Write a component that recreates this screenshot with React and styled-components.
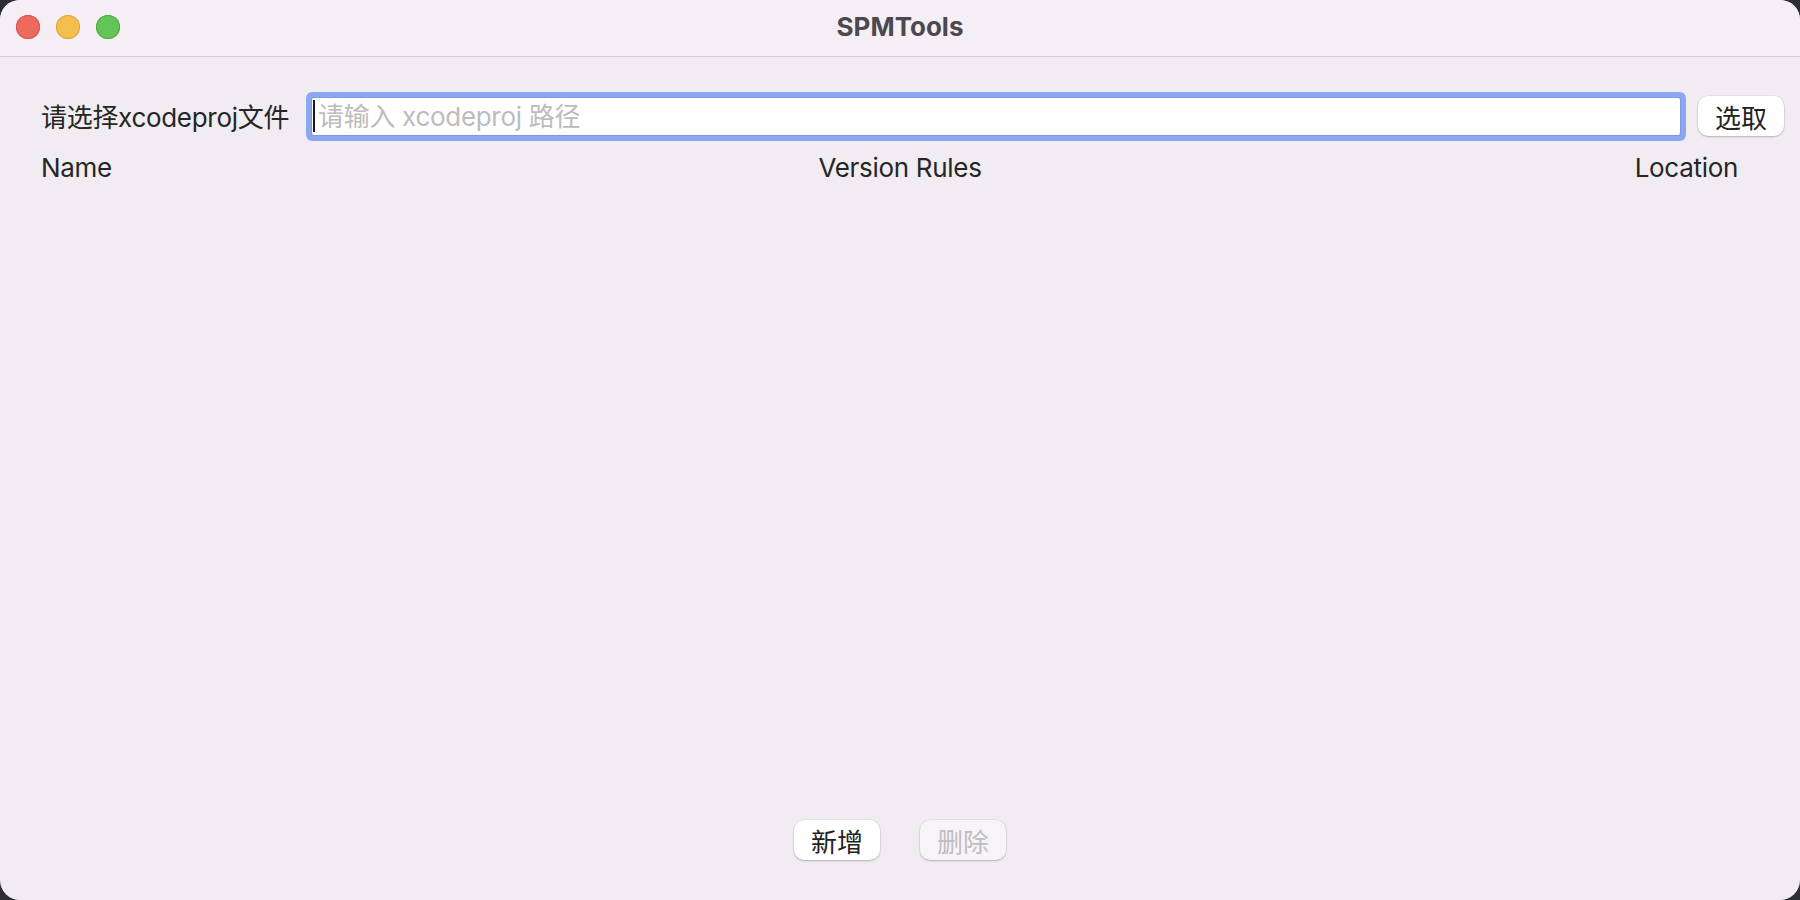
import React from "react";
import styled, { createGlobalStyle } from "styled-components";

const Global = createGlobalStyle`
  html, body { margin: 0; padding: 0; background: #2c2e31; }
  body { font-family: Inter, "Noto Sans CJK SC", sans-serif; }
  * { box-sizing: border-box; }
`;

const Window = styled.div`
  width: 1800px;
  height: 900px;
  border-radius: 20px;
  overflow: hidden;
  background: #f0ecf2;
  display: flex;
  flex-direction: column;
  font-family: Inter, "Noto Sans CJK SC", sans-serif;
  color: #262626;
  letter-spacing: -0.3px;
`;

const TitleBar = styled.div`
  height: 57px;
  flex: 0 0 auto;
  background: #f5eff5;
  border-bottom: 1px solid #d4d0d5;
  display: grid;
  grid-template-columns: 1fr auto 1fr;
  align-items: center;
  padding: 0 16px;
`;

const Lights = styled.div`
  display: flex;
  gap: 16px;
  align-items: center;
  margin-top: -3px;
`;

const Light = styled.span`
  width: 24px;
  height: 24px;
  border-radius: 50%;
  background: ${(p) => p.$fill};
  box-shadow: inset 0 0 0 1px ${(p) => p.$edge};
`;

const Title = styled.div`
  font-size: 26px;
  font-weight: 700;
  color: #4c494e;
  margin-top: -4px;
  letter-spacing: 0;
`;

const Content = styled.div`
  flex: 1;
  display: flex;
  flex-direction: column;
  padding: 34px 16px 40px 41px;
`;

const PathRow = styled.div`
  height: 50px;
  display: flex;
  align-items: center;
`;

const Label = styled.span`
  font-size: 26px;
  width: 271px;
  flex: 0 0 auto;
  white-space: nowrap;
  margin-top: -1px;
`;

const Field = styled.div`
  flex: 1;
  height: 37px;
  margin-right: 18px;
  background: #ffffff;
  border-radius: 2px;
  box-shadow: 0 0 0 1px #7d99e6, 0 0 0 6px #8ca7ee;
  display: flex;
  align-items: center;
  padding-left: 1px;
`;

const Caret = styled.span`
  width: 2px;
  height: 32px;
  background: #1a1a1a;
  margin-right: 3px;
`;

const Placeholder = styled.span`
  font-size: 26px;
  color: #bdbcbd;
  white-space: nowrap;
  margin-top: -3px;
`;

const Button = styled.button`
  width: 86px;
  height: 40px;
  border: none;
  border-radius: 10px;
  background: ${(p) => (p.disabled ? "#f7f4f8" : "#ffffff")};
  color: ${(p) => (p.disabled ? "#bfbcc0" : "#222222")};
  box-shadow: 0 1px 2px rgba(0, 0, 0, 0.22), 0 0 0 0.5px rgba(0, 0, 0, 0.08);
  font-family: Inter, "Noto Sans CJK SC", sans-serif;
  font-size: 26px;
  padding: 0;
  display: flex;
  align-items: center;
  justify-content: center;
  flex: 0 0 auto;
`;

const Header = styled.div`
  margin-top: 11px;
  height: 32px;
  display: grid;
  grid-template-columns: 1fr auto 1fr;
  align-items: center;
  padding-right: 25px;
  font-size: 26px;
  line-height: 32px;
`;

const HeaderCell = styled.span`
  justify-self: ${(p) => p.$align || "start"};
  padding-right: ${(p) => p.$pr || 0}px;
`;

const ListArea = styled.div`
  flex: 1;
`;

const Footer = styled.div`
  display: flex;
  justify-content: center;
  gap: 40px;
  margin-left: -25px;
`;

export default function App() {
  return (
    <>
      <Global />
      <Window>
        <TitleBar>
          <Lights>
            <Light $fill="#ee6a5f" $edge="#d5564b" />
            <Light $fill="#f5bf4f" $edge="#d9a43f" />
            <Light $fill="#62c555" $edge="#4ea844" />
          </Lights>
          <Title>SPMTools</Title>
          <span />
        </TitleBar>
        <Content>
          <PathRow>
            <Label>请选择xcodeproj文件</Label>
            <Field>
              <Caret />
              <Placeholder>请输入 xcodeproj 路径</Placeholder>
            </Field>
            <Button>选取</Button>
          </PathRow>
          <Header>
            <HeaderCell>Name</HeaderCell>
            <HeaderCell $align="center">Version Rules</HeaderCell>
            <HeaderCell $align="end" $pr={21}>Location</HeaderCell>
          </Header>
          <ListArea />
          <Footer>
            <Button>新增</Button>
            <Button disabled>删除</Button>
          </Footer>
        </Content>
      </Window>
    </>
  );
}
